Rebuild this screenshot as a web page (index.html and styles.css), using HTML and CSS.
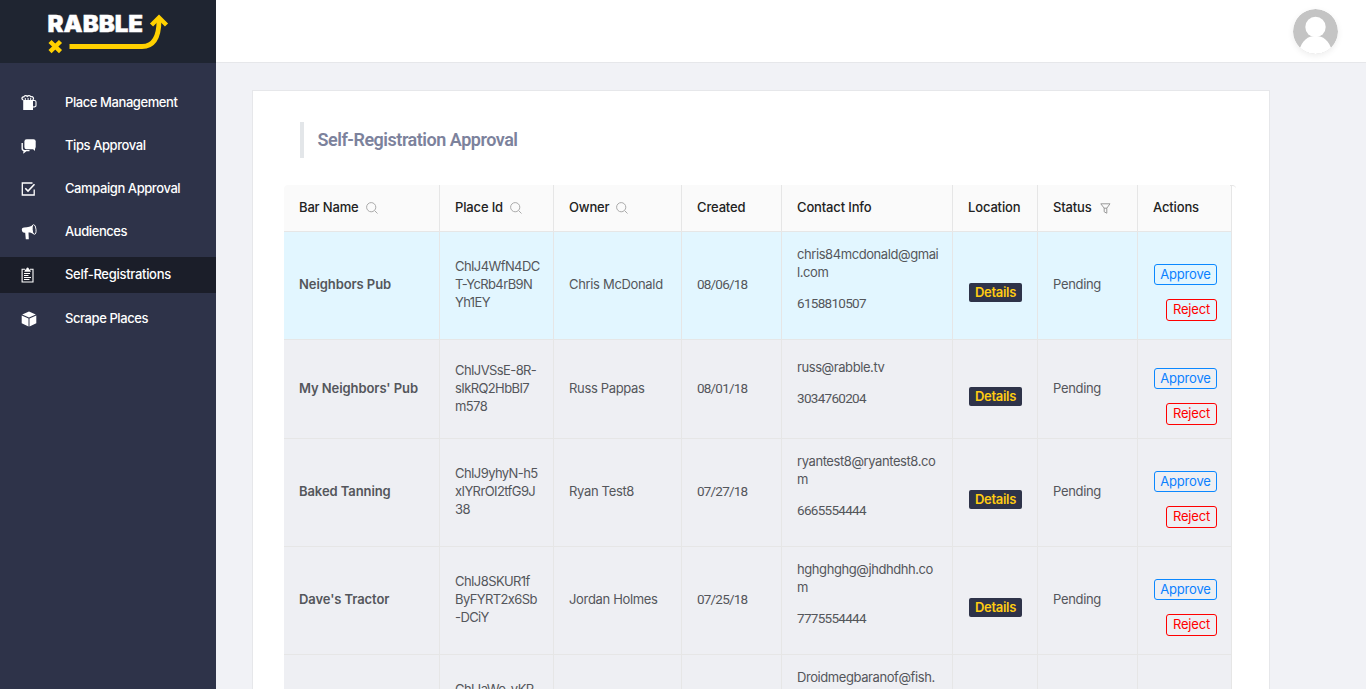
FILE: index.html
```html
<!DOCTYPE html>
<html lang="en">
<head>
<meta charset="utf-8">
<title>Self-Registration Approval</title>
<link rel="stylesheet" href="styles.css">
</head>
<body>
<svg class="defs" width="0" height="0">
  <symbol id="search" viewBox="0 0 12 12"><circle cx="5.2" cy="5.2" r="4.6" fill="none" stroke="currentColor"/><path d="M8.5 8.5 L11.5 11.5" stroke="currentColor" fill="none"/></symbol>
</svg>
<div class="app">
  <aside class="sidebar">
    <div class="brand">
      <svg width="216" height="63" viewBox="0 0 216 63">
        <text class="brand-text" x="47.5" y="32" textLength="95.5" lengthAdjust="spacingAndGlyphs">RABBLE</text>
        <g fill="none" stroke="#ffd100">
          <path d="M50 41.5 L60.5 51.7 M60.5 41.5 L50 51.7" stroke-width="4.4"/>
          <path d="M69.5 46.5 H142 C153 46.5 159 38 159 20" stroke-width="4.8"/>
          <path d="M151.5 25 L159 17.5 L166.5 25" stroke-width="4.4"/>
        </g>
      </svg>
    </div>
    <nav class="nav">
      <a class="nav-item"><svg class="nav-icon" viewBox="0 0 16 16"><path d="M2.2 5 H12 V15 H2.2 Z" fill="#fff"/><path d="M2.3 5 C0 4 1 1.5 2.8 2 C3.5.3 5.5.4 6.2 1.5 C7.4.2 9.2.6 9.8 1.8 C12 1 13.4 3.5 11.7 5" fill="none" stroke="#fff" stroke-width="1.2"/><path d="M4.3 5 V3 M7.1 5 V3 M9.7 5 V3" stroke="#fff"/><path d="M12 5.5 H13.5 Q15 5.5 15 7 V10.5 Q15 12 12 12" fill="none" stroke="#fff" stroke-width="1.1"/></svg><span>Place Management</span></a>
      <a class="nav-item"><svg class="nav-icon" viewBox="0 0 16 16"><rect x="3.4" y="1.2" width="11.3" height="10" rx="2.2" fill="#fff"/><path d="M11 10 L14 13 V9 Z" fill="#fff"/><path d="M1.2 5 V10.5 Q1.2 12.6 3.5 12.6 H8.5 M3 12.3 V14.3 L5.6 12.3" fill="none" stroke="#fff" stroke-width="1.4"/></svg><span>Tips Approval</span></a>
      <a class="nav-item"><svg class="nav-icon" viewBox="0 0 16 16"><path d="M11.5 2 H1.3 V14 H13.2 V8.5" fill="none" stroke="#fff" stroke-width="1.3"/><path d="M4.3 7.3 L7 10 L13.5 3.2" fill="none" stroke="#fff" stroke-width="1.6"/></svg><span>Campaign Approval</span></a>
      <a class="nav-item"><svg class="nav-icon" viewBox="0 0 16 16"><path d="M.8 5 Q1 3.6 3 3.5 C7 3.4 10 2.6 12 .8 C11 4 11.3 7.5 12.8 10.4 C11 9 9.2 8.4 7.5 8.5 L7.8 15.3 H4.8 L4.2 8.8 C2 9 .8 8 .8 5 Z" fill="#fff"/><ellipse cx="13" cy="5.5" rx="2" ry="4.8" fill="none" stroke="#fff" stroke-width=".9" transform="rotate(-5 13 5.5)"/></svg><span>Audiences</span></a>
      <a class="nav-item active"><svg class="nav-icon" viewBox="0 0 16 16"><path d="M4 2.2 H1.1 V15 H12 V2.2 H9" fill="none" stroke="#fff" stroke-width="1.1"/><path d="M3.3 4.7 L4.2 2.6 H5.2 Q5.2.6 6.6.6 Q8 .6 8 2.6 H9 L9.9 4.7 Z" fill="#fff"/><path d="M3 6.5 H9 M3 8.5 H7.5 M3 10.5 H10 M3 12.5 H8.5" stroke="#fff"/></svg><span>Self-Registrations</span></a>
      <a class="nav-item last-item"><svg class="nav-icon" viewBox="0 0 16 16"><path d="M8 .5 L14.8 3.4 L8 6.6 L1.2 3.4 Z M.7 4.4 L7.5 7.5 V15.4 L.7 12.3 Z M15.3 4.4 L8.5 7.5 V15.4 L15.3 12.3 Z" fill="#fff"/></svg><span>Scrape Places</span></a>
    </nav>
  </aside>
  <div class="main">
    <header class="topbar">
      <svg class="avatar" viewBox="0 0 45 45"><defs><clipPath id="round"><circle cx="22.5" cy="22.5" r="22.5"/></clipPath></defs><g clip-path="url(#round)"><path d="M0 0H45V45H0Z" fill="#c4c4c4"/><ellipse cx="22.5" cy="18" rx="10.2" ry="10.2" fill="#fff"/><path d="M6 42 C9 31 15 27 22.5 27 S36 31 39 42 V45 H6 Z" fill="#fff"/></g></svg>
    </header>
    <main class="card">
      <h1 class="title"><span>Self-Registration Approval</span></h1>
      <section class="table">
        <div class="row head">
          <div><span>Bar Name</span><svg class="search"><use href="#search"/></svg></div>
          <div><span>Place Id</span><svg class="search"><use href="#search"/></svg></div>
          <div><span>Owner</span><svg class="search"><use href="#search"/></svg></div>
          <div><span>Created</span></div>
          <div><span>Contact Info</span></div>
          <div><span>Location</span></div>
          <div><span>Status</span><svg class="filter" viewBox="0 0 11 11"><path d="M.8 .8 H10 L6.8 5.2 V10.2 L4.2 8.8 V5.2 Z M3.8 5.2 H7" fill="none" stroke="#999"/></svg></div>
          <div class="corner"><span>Actions</span></div>
        </div>
        <div class="row hover">
          <div class="name">Neighbors Pub</div><div class="place">ChIJ4WfN4DC<br>T-YcRb4rB9N<br>Yh1EY</div><div>Chris McDonald</div><div class="num date">08/06/18</div>
          <div class="contact"><p>chris84mcdonald@gmai<br>l.com</p><p class="num">6158810507</p></div>
          <div><button class="details">Details</button></div><div>Pending</div><div class="actions"><button class="approve">Approve</button><button class="reject">Reject</button></div>
        </div>
        <div class="row short">
          <div class="name">My Neighbors' Pub</div><div class="place">ChIJVSsE-8R-<br>sIkRQ2HbBI7<br>m578</div><div>Russ Pappas</div><div class="num date">08/01/18</div>
          <div class="contact"><p>russ@rabble.tv</p><p class="num">3034760204</p></div>
          <div><button class="details">Details</button></div><div>Pending</div><div class="actions"><button class="approve">Approve</button><button class="reject">Reject</button></div>
        </div>
        <div class="row">
          <div class="name">Baked Tanning</div><div class="place">ChIJ9yhyN-h5<br>xIYRrOI2tfG9J<br>38</div><div>Ryan Test8</div><div class="num date">07/27/18</div>
          <div class="contact"><p>ryantest8@ryantest8.co<br>m</p><p class="num">6665554444</p></div>
          <div><button class="details">Details</button></div><div>Pending</div><div class="actions"><button class="approve">Approve</button><button class="reject">Reject</button></div>
        </div>
        <div class="row">
          <div class="name">Dave's Tractor</div><div class="place">ChIJ8SKUR1f<br>ByFYRT2x6Sb<br>-DCiY</div><div>Jordan Holmes</div><div class="num date">07/25/18</div>
          <div class="contact"><p>hghghghg@jhdhdhh.co<br>m</p><p class="num">7775554444</p></div>
          <div><button class="details">Details</button></div><div>Pending</div><div class="actions"><button class="approve">Approve</button><button class="reject">Reject</button></div>
        </div>
        <div class="row last">
          <div></div><div class="place">ChIJaWo-yKR</div><div></div><div></div>
          <div class="contact"><p>Droidmegbaranof@fish.</p></div>
          <div></div><div></div><div></div>
        </div>
      </section>
    </main>
  </div>
</div>
</body>
</html>
```

FILE: styles.css
```css
* { box-sizing: border-box; }
body { margin: 0; font: 13px/18px Inter, "Liberation Sans", sans-serif; color: #54565b; }
.defs { display: none; }
.app { display: flex; height: 689px; overflow: hidden; }
.sidebar { width: 216px; flex: none; background: #2e3349; }
.brand { height: 63px; background: #1f2531; }
.brand svg { display: block; }
.brand-text { font: 900 22.5px Inter, sans-serif; fill: #fff; stroke: #fff; stroke-width: .4px; }
.nav { padding-top: 22px; display: flex; flex-direction: column; gap: 7px; }
.nav-item { display: flex; align-items: center; height: 36px; padding-left: 21px; color: #fff; font-weight: 500; letter-spacing: -.42px; white-space: nowrap; }
.nav-item span { padding-bottom: 2px; }
.nav-item.active { background: #1b1e29; letter-spacing: -.3px; }
.nav-item.last-item { margin-top: 1px; }
.nav-icon { width: 16px; height: 16px; margin-right: 28px; }
.main { flex: 1; background: #f1f2f6; }
.topbar { height: 63px; background: #fff; border-bottom: 1px solid #e6e7ea; display: flex; justify-content: flex-end; padding: 9px 28px 0 0; }
.avatar { width: 45px; height: 45px; border-radius: 50%; box-shadow: 0 2px 6px rgba(0,0,0,.07); }
.card { width: 1018px; height: 640px; margin: 27px 0 0 36px; border: 1px solid #e6e7ea; background: #fff; padding: 31px 31px 0; }
.title { margin: 0 0 27px 16px; height: 36px; border-left: 4px solid #e3e6e9; padding-left: 13.5px; font: 600 18px/35px Roboto, sans-serif; letter-spacing: -.48px; color: #7c829c; white-space: nowrap; }
.table { width: 948px; }
.row { display: grid; grid-template-columns: 156px 114px 128px 100px 171px 85px 100px 94px; height: 108px; background: #eeeff3; white-space: nowrap; letter-spacing: -.33px; }
.row > div { border-right: 1px solid #e6e6e6; border-bottom: 1px solid #e6e6e6; padding: 0 0 3px 15px; display: grid; align-content: center; justify-content: start; }
.row.short { height: 99px; }
.row.hover { background: #e2f6ff; }
.row.head { height: 47px; background: #fafafa; color: #222; font-weight: 500; letter-spacing: -.15px; border-radius: 4px 4px 0 0; }
.row.head > div { display: flex; align-items: center; padding-bottom: 2px; }
.row .corner { position: relative; }
.corner::after { content: ""; position: absolute; top: 0; right: -5px; width: 6px; height: 3px; border-top: 1px solid #e6e6e6; border-top-right-radius: 4px; }
.search { width: 12px; height: 12px; margin: 2px 0 0 7px; color: #aaa; }
.filter { width: 11px; height: 11px; margin: 3px 0 0 8px; }
.row .name { font-weight: 600; letter-spacing: -.08px; }
.row .place { letter-spacing: -.6px; }
.row .contact { letter-spacing: -.42px; padding-bottom: 1px; }
.contact p { margin: 0 0 13px; }
.row .num { font-family: Roboto, sans-serif; font-size: 13.5px; letter-spacing: -.7px; }
.row .date { letter-spacing: -.8px; padding-bottom: 3px; }
.row.last > div { align-content: start; }
.row.last .place { padding-top: 25px; }
.row.last .contact { padding-top: 13px; }
button { font: inherit; padding: 0; background: none; }
.details { width: 53px; height: 19px; margin: 17px 0 0 1px; border: 0; border-radius: 2px; background: #2e3349; color: #fc1; font-weight: 600; letter-spacing: -.3px; line-height: 18px; padding-bottom: 1px; }
.row .actions { justify-items: end; justify-content: end; padding: 14px 14px 0 0; gap: 14px; }
.approve, .reject { border: 1px solid #0b88ff; border-radius: 3px; color: #0b80ff; height: 21px; width: 63px; line-height: 19px; letter-spacing: -.2px; }
.reject { border-color: #f00; color: #f00; width: 51px; height: 22px; padding-bottom: 1px; }
```
